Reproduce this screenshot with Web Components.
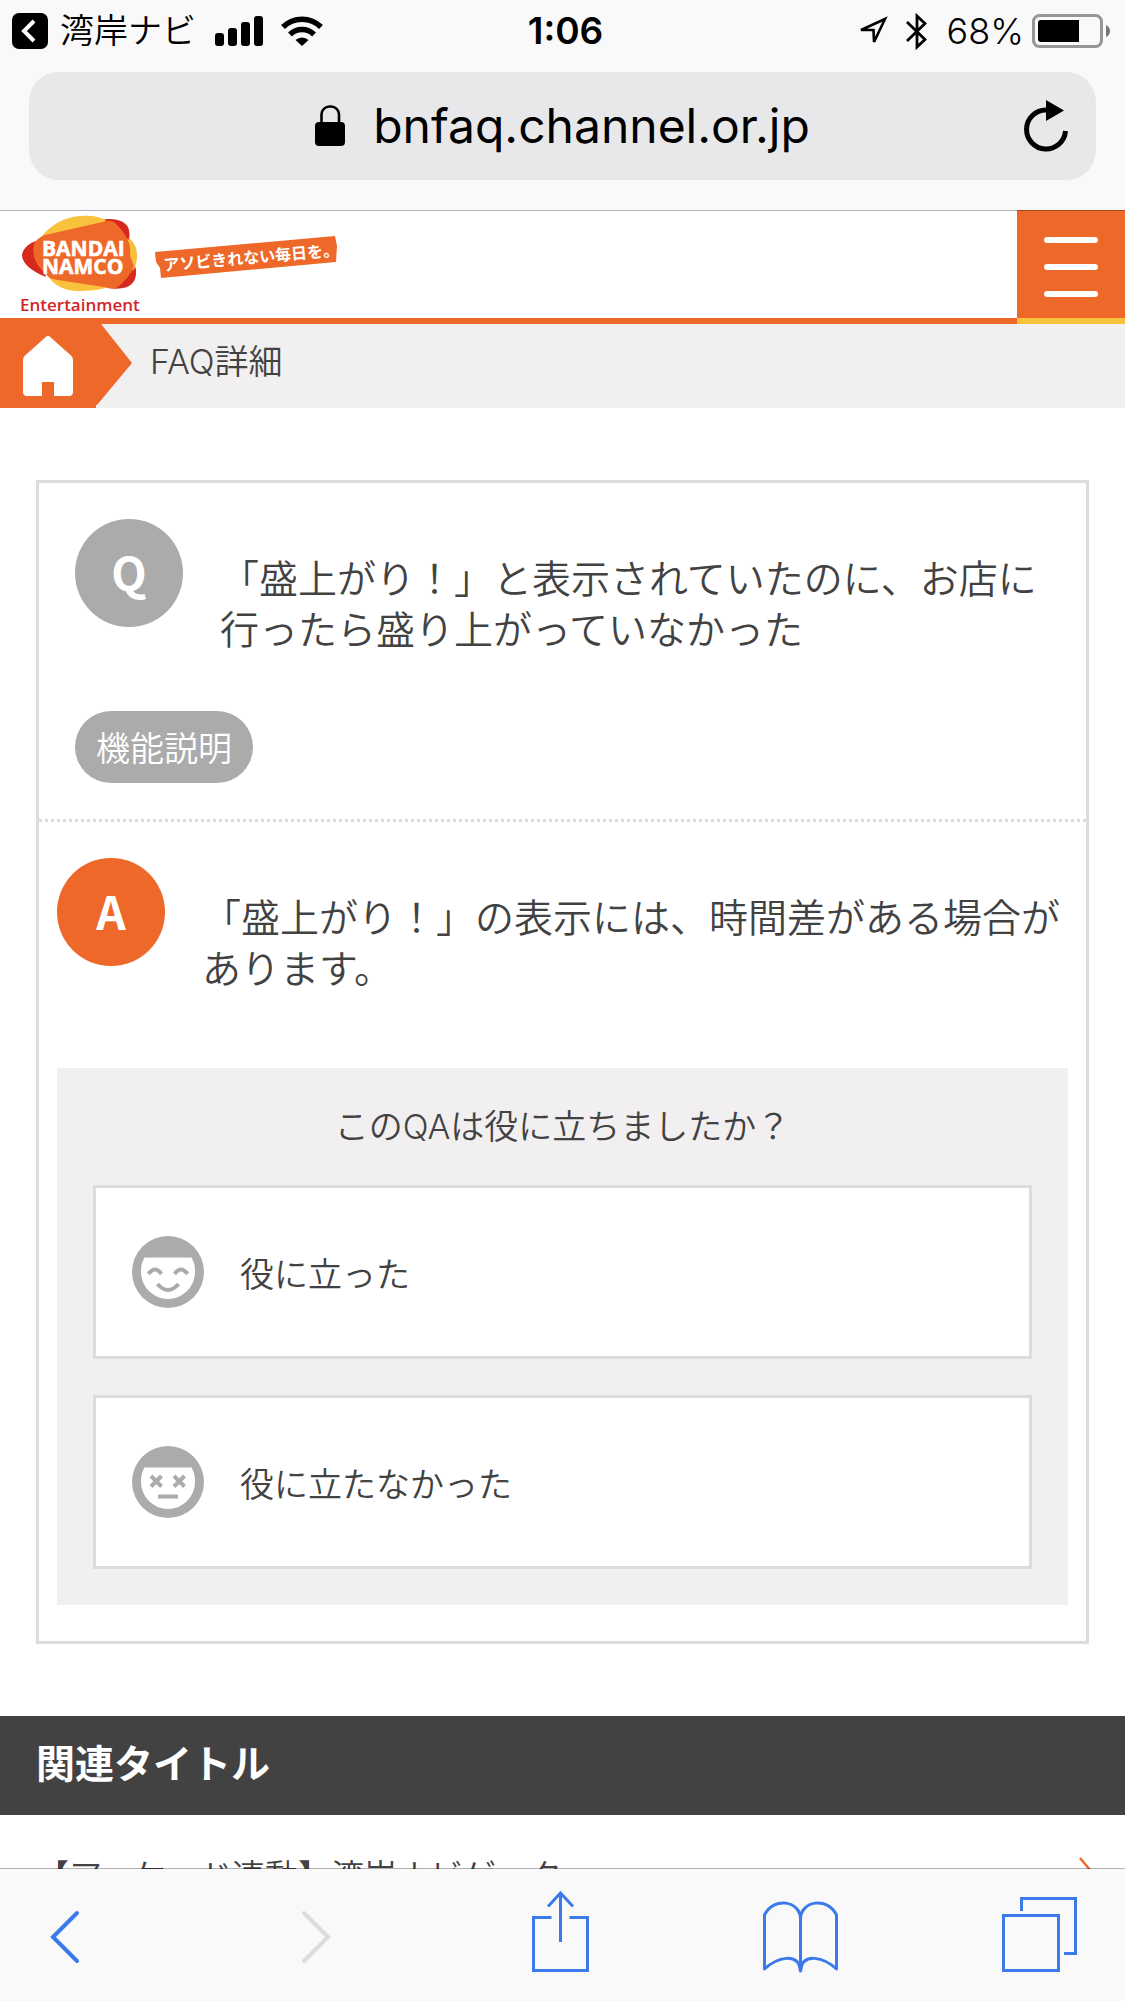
<!DOCTYPE html>
<html lang="ja">
<head>
<meta charset="utf-8">
<meta name="viewport" content="width=device-width, initial-scale=1">
<title>FAQ詳細</title>
<style>
  html, body { margin: 0; }
  body {
    --orange: #ee682a;
    --yellow: #f9c23c;
    --grey: #ababab;
    --line: #dcdcdc;
    --pale: #f1eff0;
    --chrome: #f9f9f9;
    --blue: #3a7aea;
    --ink: #424242;
    --small: 34px;
    --large: 39px;
    color: var(--ink);
    background: #fff;
    font-family: Inter, "Noto Sans CJK JP", sans-serif;
    font-size: var(--small);
    font-weight: 350;
    text-spacing-trim: space-all;
  }
</style>
</head>
<body>
<phone-browser>
  <status-bar slot="top" app="湾岸ナビ" time="1:06" battery="68%"></status-bar>
  <address-bar slot="top">bnfaq.channel.or.jp</address-bar>

  <site-header></site-header>
  <crumb-bar>FAQ詳細</crumb-bar>
  <qa-card>
    <qa-entry slot="question" mark="Q">「盛上がり！」と表示されていたのに、お店に行ったら盛り上がっていなかった</qa-entry>
    <qa-tag slot="question">機能説明</qa-tag>
    <qa-entry slot="answer" mark="A" active>「盛上がり！」の表示には、時間差がある場合があります。</qa-entry>
    <feedback-panel slot="answer">
      <span slot="title">このQAは役に立ちましたか？</span>
      <vote-button face="happy">役に立った</vote-button>
      <vote-button face="dead">役に立たなかった</vote-button>
    </feedback-panel>
  </qa-card>
  <section-title>関連タイトル</section-title>
  <link-row>【アーケード連動】湾岸ナビゲーター</link-row>

  <tool-bar slot="bottom"></tool-bar>
</phone-browser>

<script>
const define = (name, html, setup) => {
  const template = document.createElement('template');
  template.innerHTML = '<style>:host,*{box-sizing:border-box}svg{display:block;flex:none}button{font:inherit;color:inherit;background:none;border:0;padding:0;margin:0;display:block}a{color:inherit;text-decoration:none}</style>' + html;
  customElements.define(name, class extends HTMLElement {
    constructor() {
      super();
      this.attachShadow({ mode: 'open' }).append(template.content.cloneNode(true));
    }
    connectedCallback() { if (setup) setup(this, this.shadowRoot); }
  });
};

define('phone-browser', `
  <style>
    :host { display: flex; flex-direction: column; height: 100vh; }
    header, footer { flex: none; background: var(--chrome); position: relative; z-index: 1; }
    header { box-shadow: 0 1px rgba(0,0,0,.3); }
    footer { box-shadow: 0 -1px rgba(0,0,0,.3); }
    main { flex: 1; min-height: 0; overflow-y: auto; scrollbar-width: none; }
  </style>
  <header><slot name="top"></slot></header>
  <main><slot></slot></main>
  <footer><slot name="bottom"></slot></footer>`);

define('status-bar', `
  <style>
    :host { display: grid; grid-template-columns: 1fr auto 1fr; align-items: center; height: 60px; padding: 2px 6px 0 12px; color: #000; font-size: 36px; line-height: 48px; }
    .side { display: flex; align-items: center; }
    .end { justify-content: flex-end; padding-right: 8px; }
    button { display: flex; align-items: center; gap: 12px; }
    .app { font-size: var(--small); }
    .time { font-size: 37px; font-weight: 600; }
    .bars { margin: 0 18px 0 19px; }
    .bt { margin: 0 20px 0 18px; }
    .battery { margin-left: 8px; }
  </style>
  <div class="side">
    <button>
      <svg width="36" height="36" viewBox="0 0 36 36" aria-hidden="true"><rect width="36" height="36" rx="7"/><path d="M22 8L12 18l10 10" fill="none" stroke="#fff" stroke-width="4"/></svg>
      <span class="app"></span>
    </button>
    <svg class="bars" width="48" height="30" viewBox="0 0 48 30" aria-hidden="true"><rect y="17" width="9" height="13" rx="3"/><rect x="13" y="12" width="9" height="18" rx="3"/><rect x="26" y="6" width="9" height="24" rx="3"/><rect x="39" width="9" height="30" rx="3"/></svg>
    <svg width="42" height="30" viewBox="0 0 42 30" aria-hidden="true"><g fill="none" stroke="#000" stroke-width="5.500"><path d="M2 11a27 27 0 0 1 38 0"/><path d="M9 18.500a17 17 0 0 1 24 0"/></g><path d="M14.500 24a9.500 9.500 0 0 1 13 0L21 30z"/></svg>
  </div>
  <span class="time"></span>
  <div class="side end">
    <svg width="30" height="30" viewBox="0 0 30 30" aria-hidden="true"><path d="M27 3L3 14h12.500l.500 12z" fill="none" stroke="#000" stroke-width="2.600"/></svg>
    <svg class="bt" width="21" height="37" viewBox="0 0 21 37" aria-hidden="true"><path d="M1 9l18 17.500L11 34V3l8 7.500L1 28" fill="none" stroke="#000" stroke-width="2.800"/></svg>
    <span class="level"></span>
    <svg class="battery" width="79" height="34" viewBox="0 0 79 34" aria-hidden="true"><rect x="1.500" y="1.500" width="68" height="31" rx="6" fill="none" stroke="#969696" stroke-width="3"/><path d="M9 6h38v22H9a3 3 0 0 1-3-3V9a3 3 0 0 1 3-3z"/><path d="M74 11q4 2 4 6t-4 6z" fill="#777"/></svg>
  </div>`, (host, root) => {
  root.querySelector('.app').textContent = host.getAttribute('app');
  root.querySelector('.time').textContent = host.getAttribute('time');
  root.querySelector('.level').textContent = host.getAttribute('battery');
});

define('address-bar', `
  <style>
    :host { display: block; padding: 12px 29px 30px; color: #000; }
    .field { display: grid; grid-template-columns: 1fr auto 1fr; align-items: center; height: 108px; padding: 0 28px; border-radius: 30px; background: #e8e8ea; }
    .url { grid-column: 2; display: flex; align-items: center; gap: 28px; font-size: 48px; line-height: 60px; font-weight: 400; }
    .reload { justify-self: end; }
  </style>
  <div class="field">
    <div class="url">
      <svg width="30" height="42" viewBox="0 0 30 42" aria-hidden="true"><rect y="17" width="30" height="24" rx="4"/><path d="M6.500 18V9.500a8 8 0 0 1 8-8h1.500a8 8 0 0 1 8 8V18" fill="none" stroke="#000" stroke-width="2.600"/></svg>
      <slot></slot>
    </div>
    <button class="reload" aria-label="再読み込み"><svg width="44" height="52" viewBox="0 0 44 52" aria-hidden="true"><path d="M22 10a19.500 19.500 0 1 0 19.500 21" fill="none" stroke="#000" stroke-width="5"/><path d="M22 0l18 10.500L22 21z"/></svg></button>
  </div>`);

define('site-header', `
  <style>
    :host { display: flex; align-items: flex-start; justify-content: space-between; height: 114px; border-bottom: 6px solid var(--orange); }
    .brand { padding: 4px 0 0 20px; }
    .menu { width: 108px; height: 114px; padding-top: 6px; border-bottom: 6px solid var(--yellow); background: var(--orange); display: grid; place-items: center; }
    text { font-family: "Open Sans", sans-serif; }
    .tag { font-family: "Noto Sans CJK JP", sans-serif; }
  </style>
  <a class="brand" href="#" aria-label="BANDAI NAMCO Entertainment">
    <svg width="320" height="104" viewBox="0 0 320 104">
      <path d="M80 6c15-3 27 1 29 10q1 5 0 10L98 22z" fill="#d7281f"/>
      <path d="M115 52c3 8 0 18-8 21-6 2-12 2-20 1l14-20z" fill="#d7281f"/>
      <path d="M16 27C7 30 2 36 2 42c1 8 9 15 24 21L20 40z" fill="#d7281f"/>
      <path d="M17 29C28 11 46 2 62 2c10-1 17 1 24 4L70 30z" fill="#f9c23c"/>
      <path d="M109 24c10 8 10 22 4 33L104 40z" fill="#f9c23c"/>
      <path d="M26 60c8 11 16 16 30 17 14 0 27-1 38-6L62 55z" fill="#f9c23c"/>
      <path d="M15 28q3-4 10-7L87 7c4-1 8 1 10 4 9 9 15 19 13 31l4 10c-3 8-9 15-15 20q-3 3-9 2L38 66c-5-1-8-1-11-5C16 52 10 40 15 28z" fill="#ee682a"/>
      <text font-size="21" font-weight="700" fill="#fff" stroke="#fff" stroke-width=".6"><tspan x="22" y="42">BANDAI</tspan><tspan x="22" y="60">NAMCO</tspan></text>
      <text x="0" y="97" font-size="17" font-weight="600" fill="#d3252b">Entertainment</text>
      <path d="M135 38L315 22l2 10-1 16-175 16-1-10-4-6z" fill="#ee682a"/>
      <text class="tag" x="144" y="57" font-size="16" font-weight="700" fill="#fff" transform="rotate(-5 144 57)">アソビきれない毎日を。</text>
    </svg>
  </a>
  <button class="menu" aria-label="メニュー"><svg width="54" height="60" viewBox="0 0 54 60" fill="#fff" aria-hidden="true"><rect width="54" height="6" rx="3"/><rect y="27" width="54" height="6" rx="3"/><rect y="54" width="54" height="6" rx="3"/></svg></button>`);

define('crumb-bar', `
  <style>
    :host { display: block; background: var(--pale); }
    nav { display: flex; gap: 18px; height: 84px; line-height: 76px; }
  </style>
  <nav>
    <a href="#" aria-label="ホーム"><svg width="132" height="84" viewBox="0 0 132 84" aria-hidden="true"><path d="M0 0h101l31 39-35 42h-1v3H0z" fill="#ee682a"/><path d="M45.500 13.200q2.500-2.400 5 0L71 31.500q2 2 2 5V68a4 4 0 0 1-4 4H54V58H42v14H27a4 4 0 0 1-4-4V36.500q0-3 2-5z" fill="#fff"/></svg></a>
    <span><slot></slot></span>
  </nav>`);

define('qa-card', `
  <style>
    :host { display: block; margin: 72px 36px; border: 3px solid var(--line); }
    .q { padding: 36px; border-bottom: 3px dotted var(--line); }
    .a { padding: 36px 18px; }
  </style>
  <section class="q"><slot name="question"></slot></section>
  <section class="a"><slot name="answer"></slot></section>`);

define('qa-entry', `
  <style>
    :host { display: flex; gap: 37px; align-items: flex-start; font-size: var(--large); line-height: 51px; }
    .mark { flex: none; width: 108px; height: 108px; padding-bottom: 4px; border-radius: 50%; background: var(--grey); color: #fff; display: grid; place-items: center; font: 700 46px/60px "Noto Sans CJK JP", sans-serif; }
    :host([active]) .mark { background: var(--orange); }
    p { margin: 34px 0 0; }
  </style>
  <span class="mark"></span><p><slot></slot></p>`, (host, root) => {
  root.querySelector('.mark').textContent = host.getAttribute('mark');
});

define('qa-tag', `
  <style>
    :host { display: flex; margin-top: 56px; }
    a { height: 72px; padding: 0 21px; border-radius: 36px; background: var(--grey); color: #fff; line-height: 75px; }
  </style>
  <a href="#"><slot></slot></a>`);

define('feedback-panel', `
  <style>
    :host { display: flex; flex-direction: column; gap: 36px; margin-top: 74px; padding: 36px; background: var(--pale); }
    h2 { margin: 0; font-size: inherit; font-weight: inherit; text-align: center; line-height: 45px; }
  </style>
  <h2><slot name="title"></slot></h2>
  <slot></slot>`);

define('vote-button', `
  <style>
    :host { display: block; }
    button { display: flex; align-items: center; gap: 36px; width: 100%; height: 174px; padding: 0 36px; border: 3px solid var(--line); background: #fff; text-align: left; }
    .happy, .dead { display: none; }
    :host([face=happy]) .happy, :host([face=dead]) .dead { display: inline; }
  </style>
  <button>
    <svg width="72" height="72" viewBox="0 0 72 72" fill="none" stroke="#ababab" stroke-width="4" aria-hidden="true">
      <circle cx="36" cy="36" r="36" fill="#ababab" stroke="none"/>
      <path d="M12.500 21.500h47A27 27 0 0 1 63 36a27 27 0 0 1-54 0 27 27 0 0 1 3.500-14.500z" fill="#fff" stroke="none"/>
      <g class="happy"><path d="M16.500 38q6.500-9 13 0M42.500 38q6.500-9 13 0M25.500 48q10.500 12 21 0"/></g>
      <g class="dead"><path d="M19 30l10.500 10.500M29.500 30L19 40.500M42 30l10.500 10.500M52.500 30L42 40.500M26 50.500h20"/></g>
    </svg>
    <span><slot></slot></span>
  </button>`);

define('section-title', `
  <style>
    :host { display: block; background: var(--ink); color: #fff; }
    h2 { margin: 0; padding: 18px 36px 21px; font-size: var(--large); font-weight: 700; line-height: 60px; }
  </style>
  <h2><slot></slot></h2>`);

define('link-row', `
  <style>
    :host { display: block; font-size: 33px; }
    a { display: flex; align-items: center; justify-content: space-between; padding: 36px 27px 36px 36px; line-height: 51px; }
  </style>
  <a href="#"><span><slot></slot></span><svg width="21" height="42" viewBox="0 0 21 42" aria-hidden="true"><path d="M3 2l16 19L3 40" fill="none" stroke="#ee682a" stroke-width="2.400"/></svg></a>`);

define('tool-bar', `
  <style>
    :host { display: block; }
    nav { display: flex; align-items: flex-start; justify-content: space-between; height: 132px; padding: 22px 48px 0; }
    svg { fill: none; stroke: var(--blue); stroke-width: 3; }
    .arrow { stroke-width: 4; stroke-linecap: round; }
    .off { stroke: #dcdcdc; }
  </style>
  <nav>
    <button aria-label="戻る"><svg class="arrow" width="76" height="82" viewBox="0 0 76 82"><path d="M29 22L5 46l24 24"/></svg></button>
    <button aria-label="進む" disabled><svg class="arrow off" width="76" height="82" viewBox="0 0 76 82"><path d="M18 22l24 24-24 24"/></svg></button>
    <button aria-label="共有"><svg width="76" height="82" viewBox="-7 0 76 82"><path d="M19.500 26.500h-18v53h54v-53h-18M28.500 51V3M16 15.500L28.500 2 41 15.500"/></svg></button>
    <button aria-label="ブックマーク"><svg width="76" height="84" viewBox="0 0 76 84"><path d="M37.500 80V28c0-18-27-23-36-4v54c12-11 34-18 36 2 2-20 24-13 36-2V24c-9-19-36-14-36 4" stroke-linejoin="round"/></svg></button>
    <button aria-label="タブ"><svg width="76" height="82" viewBox="0 0 76 82"><path d="M2.500 24.500h55v55h-55zM20.500 20V7.500h54v55H63"/></svg></button>
  </nav>`);
</script>
</body>
</html>
